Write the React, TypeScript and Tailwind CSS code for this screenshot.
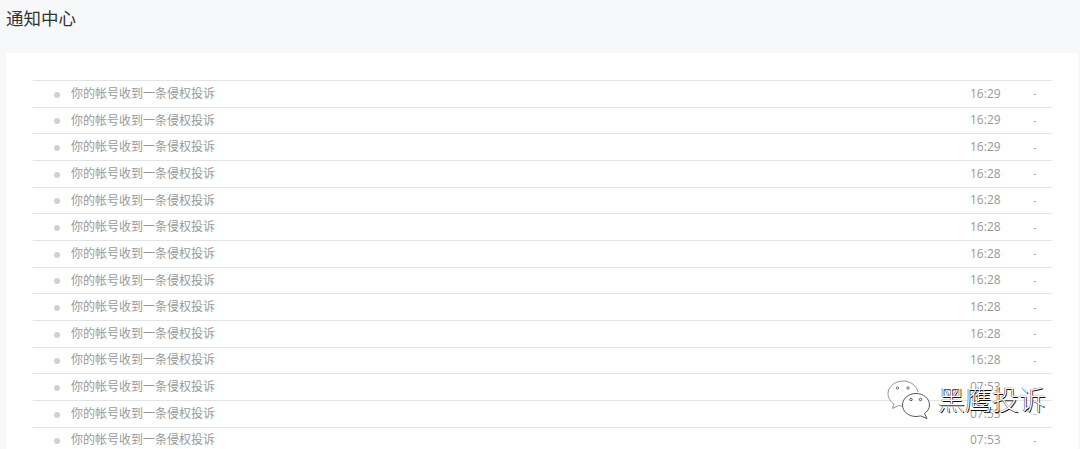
const times = [
  "16:29", "16:29", "16:29", "16:28", "16:28", "16:28", "16:28",
  "16:28", "16:28", "16:28", "16:28", "07:53", "07:53", "07:53",
];

const NoticeRow: React.FC<{ time: string }> = ({ time }) => {
  return (
    <div className="flex items-center h-[26.66px] shrink-0 border-t border-[#e4e4e4] text-[12px] text-[#999]">
      <span className="ml-[21px] mr-[11px] w-[6px] h-[6px] rounded-full bg-[#d0d0d0] mt-[2px]"></span>
      <span className="flex-1 pt-[0.2px]">你的帐号收到一条侵权投诉</span>
      <span className="w-[41px] text-[12px] text-[#999] font-['Open_Sans',sans-serif]">{time}</span>
      <span className="w-[19px] ml-[22px] text-[11px] text-[#aaa] leading-none">-</span>
    </div>
  );
};

const WechatIcon = () => {
  return (
    <svg width="44" height="40" viewBox="0 0 44 40" fill="none" strokeWidth="0.9">
      <path
        d="M16 1C8 1 1 6.5 1 13.5c0 4.5 2.5 8 6 10.5l-1.500 4.500 6-3c1.500.4 2.500.5 4 .5"
        fill="white"
        fillOpacity="0.55"
        stroke="#888"
      />
      <path d="M16 1c7 0 13.500 4 15 11" stroke="#888" />
      <path
        d="M29 13.500c-7.500 0-13.500 5-13.500 11.500S21.500 36.500 29 36.500c1.500 0 3-.2 4.500-.6L40 38.500l-2.500-5c3-2 5-5 5-8.500 0-6.500-6-11.500-13.500-11.500z"
        fill="white"
        fillOpacity="0.6"
        stroke="#444"
      />
      <circle cx="10.500" cy="8" r="1.200" stroke="#666" />
      <circle cx="21" cy="8" r="1.200" stroke="#666" />
      <circle cx="24" cy="19.500" r="1.200" stroke="#444" />
      <circle cx="33.500" cy="19.500" r="1.200" stroke="#444" />
    </svg>
  );
};

export default function App() {
  return (
    <div className="relative h-[449px] w-[1080px] overflow-hidden bg-[#f7f8fa] font-['Liberation_Sans','Noto_Sans_CJK_SC',sans-serif]">
      <h1 className="pl-[6px] pt-[8px] h-[53px] text-[17.5px] leading-[23px] font-normal text-[#333]">通知中心</h1>
      <div className="ml-[6px] mr-[2px] h-[396px] bg-white rounded-[2px] pt-[27px] pl-[27px] pr-[26px] flex flex-col overflow-hidden">
        {times.map((time, i) => (
          <NoticeRow key={i} time={time} />
        ))}
      </div>
      <div className="absolute left-[887px] top-[380px] flex items-start">
        <WechatIcon />
        <span className="ml-[7px] mt-[7px] text-[27px] leading-[28px] font-light text-white [text-shadow:0.8px_0.8px_0.5px_#111,-0.4px_-0.2px_0.5px_#333]">
          黑鹰投诉
        </span>
      </div>
    </div>
  );
}
